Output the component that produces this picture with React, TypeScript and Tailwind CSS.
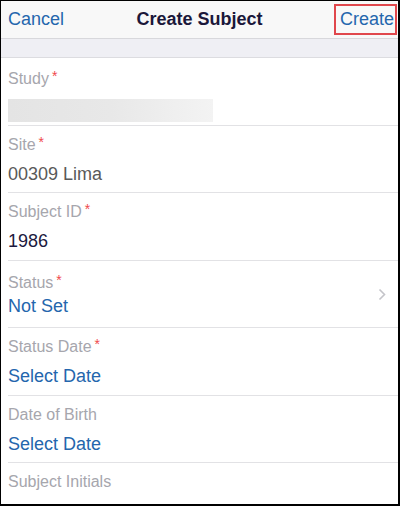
const font = { fontFamily: '"Liberation Sans", Arial, sans-serif' };

type Field = {
  label: string;
  required?: boolean;
  value?: string;
  tone?: "gray" | "dark" | "blue";
  chevron?: boolean;
};

const fields: Field[] = [
  { label: "Site", required: true, value: "00309 Lima", tone: "gray" },
  { label: "Subject ID", required: true, value: "1986", tone: "dark" },
  { label: "Status", required: true, value: "Not Set", tone: "blue", chevron: true },
  { label: "Status Date", required: true, value: "Select Date", tone: "blue" },
  { label: "Date of Birth", value: "Select Date", tone: "blue" },
  { label: "Subject Initials" },
];

const toneClass = {
  gray: "text-[#595959]",
  dark: "text-[#1c1940]",
  blue: "text-[#2466ad]",
};

function Label({ text, required }: { text: string; required?: boolean }) {
  return (
    <div className="flex items-start text-[16px] leading-[22px] text-[#a6a6ad]">
      <span>{text}</span>
      {required && <span className="ml-[3px] text-[14px] leading-[16px] text-[#f0494d]">*</span>}
    </div>
  );
}

export default function App() {
  return (
    <div
      className="w-[400px] h-[506px] overflow-hidden bg-white border-black border-t border-l border-r-2 border-b-2 flex flex-col"
      style={font}
    >
      <header className="relative h-[38px] shrink-0 bg-[#f8f8f8] border-b border-[#d8d8dc] flex items-center justify-between pl-[7px] pr-[1px]">
        <span className="text-[18px] text-[#2466ad]">Cancel</span>
        <span className="absolute left-1/2 -translate-x-1/2 text-[18px] font-bold text-[#1b173a]">Create Subject</span>
        <span className="text-[18px] text-[#2466ad] border-2 border-[#e0474c] pl-[4px] pr-[1px] h-[31px] leading-[27px]">
          Create
        </span>
      </header>
      <div className="h-[19px] shrink-0 bg-[#efeff4] border-b border-[#dcdce0]" />

      <div className="ml-[7px] h-[68px] shrink-0 border-b border-[#e2e2e5] pt-[10px]">
        <Label text="Study" required />
        <div className="mt-[9px] h-[23px] w-[205px] bg-gradient-to-r from-[#e4e4e4] via-[#e8e8e8] to-[#f3f3f3]" />
      </div>

      {fields.map((f) => (
        <div
          key={f.label}
          className="ml-[7px] h-[67.4px] shrink-0 border-b border-[#e2e2e5] last:border-b-0 flex items-center"
        >
          <div className={`flex-1 ${f.chevron ? "pt-[11px]" : "pt-[8px]"} self-start`}>
            <Label text={f.label} required={f.required} />
            {f.value && (
              <div
                className={`${f.chevron ? "mt-[0px]" : "mt-[6px]"} text-[18px] leading-[24px] ${toneClass[f.tone ?? "gray"]}`}
              >
                {f.value}
              </div>
            )}
          </div>
          {f.chevron && (
            <svg width="8" height="13" viewBox="0 0 8 13" className="mr-[12px] mt-[2px]">
              <path d="M1.5 1.5 L6.5 6.5 L1.5 11.5" fill="none" stroke="#c4c4c9" strokeWidth="1.6" />
            </svg>
          )}
        </div>
      ))}
    </div>
  );
}
